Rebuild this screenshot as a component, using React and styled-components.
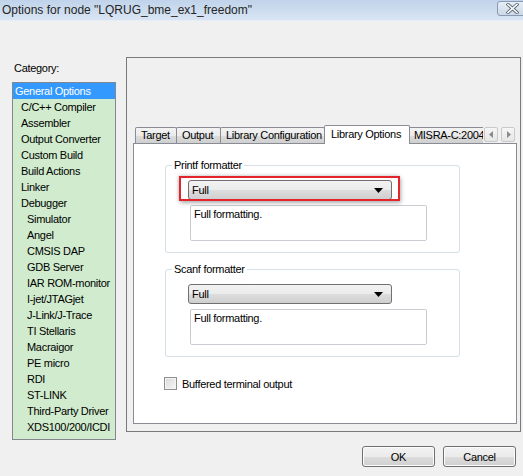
import React from "react"
import styled, { createGlobalStyle, css } from "styled-components"

const GlobalStyle = createGlobalStyle`
  html, body {
    margin: 0;
    padding: 0;
    background: #f0f0f0;
  }
  body {
    font-family: "Liberation Sans", Arial, sans-serif;
    font-size: 11px;
    letter-spacing: -0.3px;
    color: #000;
  }
`

const categories = [
  { name: "General Options", level: 0, selected: true },
  { name: "C/C++ Compiler", level: 1 },
  { name: "Assembler", level: 1 },
  { name: "Output Converter", level: 1 },
  { name: "Custom Build", level: 1 },
  { name: "Build Actions", level: 1 },
  { name: "Linker", level: 1 },
  { name: "Debugger", level: 1 },
  { name: "Simulator", level: 2 },
  { name: "Angel", level: 2 },
  { name: "CMSIS DAP", level: 2 },
  { name: "GDB Server", level: 2 },
  { name: "IAR ROM-monitor", level: 2 },
  { name: "I-jet/JTAGjet", level: 2 },
  { name: "J-Link/J-Trace", level: 2 },
  { name: "TI Stellaris", level: 2 },
  { name: "Macraigor", level: 2 },
  { name: "PE micro", level: 2 },
  { name: "RDI", level: 2 },
  { name: "ST-LINK", level: 2 },
  { name: "Third-Party Driver", level: 2 },
  { name: "XDS100/200/ICDI", level: 2 },
]

const tabs = [
  { label: "Target", width: 42 },
  { label: "Output", width: 45 },
  { label: "Library Configuration", width: 105 },
  { label: "Library Options", width: 86, active: true },
  { label: "MISRA-C:2004", width: 80 },
]

const Window = styled.div`
  width: 523px;
  height: 476px;
  overflow: hidden;
  display: flex;
  flex-direction: column;
  background: #f0f0f0;
`

const TitleBar = styled.div`
  height: 20px;
  flex: none;
  display: flex;
  align-items: center;
  justify-content: space-between;
  padding-left: 2px;
  background: linear-gradient(to bottom, #c0d3ea 0%, #cfdeef 60%, #d9e5f3 100%);
  border-bottom: 1px solid #e6edf6;
`

const Title = styled.span`
  font-size: 12px;
  letter-spacing: 0;
  color: #252525;
  white-space: nowrap;
`

const CloseButton = styled.div`
  width: 30px;
  height: 15px;
  margin-top: -3px;
  margin-right: -4px;
  border: 1px solid #8a9ab0;
  border-radius: 3px;
  background: linear-gradient(to bottom, #e6edf6, #cdd9e8);
  display: flex;
  align-items: center;
  padding-left: 8px;
  box-sizing: border-box;
`

const Body = styled.div`
  flex: 1;
  display: flex;
  flex-direction: column;
  padding: 36px 2px 0 12px;
`

const Main = styled.div`
  display: flex;
  align-items: flex-start;
  gap: 10px;
`

const CategoryColumn = styled.div`
  width: 104px;
  flex: none;
  padding-top: 4px;
`

const CategoryLabel = styled.div`
  height: 14px;
  line-height: 14px;
  padding-left: 2px;
  margin-bottom: 7px;
`

const CategoryList = styled.div`
  border: 1px solid #828790;
  background: #d0ebcd;
  height: 356px;
`

const CategoryItem = styled.div`
  height: 16px;
  line-height: 16px;
  white-space: nowrap;
  padding-left: ${p => 2 + p.$level * 6}px;
  ${p =>
    p.$selected &&
    css`
      background: #3399ff;
      color: #fff;
    `}
`

const OptionsFrame = styled.div`
  width: 395px;
  height: 375px;
  box-sizing: border-box;
  border: 1px solid #7a7a7a;
  padding: 67px 3px 7px 6px;
  display: flex;
  flex-direction: column;
`

const TabStrip = styled.div`
  height: 19px;
  flex: none;
  display: flex;
  align-items: flex-end;
  position: relative;
  z-index: 1;
  margin-bottom: -1px;
  padding-left: 2px;
`

const Tabs = styled.div`
  flex: 1;
  height: 19px;
  display: flex;
  align-items: flex-end;
  overflow: hidden;
`

const Tab = styled.div`
  flex: none;
  box-sizing: border-box;
  width: ${p => p.$width}px;
  height: 16px;
  margin-bottom: 1px;
  line-height: 15px;
  padding-left: 5px;
  white-space: nowrap;
  overflow: hidden;
  border: 1px solid #898c95;
  border-bottom: none;
  border-radius: 2px 2px 0 0;
  background: linear-gradient(to bottom, #f3f3f3 0%, #ebebeb 50%, #dddddd 51%, #cfcfcf 100%);
  & + & {
    margin-left: -1px;
  }
  ${p =>
    p.$active &&
    css`
      height: 19px;
      margin-bottom: 0;
      line-height: 17px;
      padding-left: 6px;
      background: #fff;
      margin-left: -1px;
      margin-right: -1px;
      position: relative;
      z-index: 1;
    `}
`

const ScrollArrows = styled.div`
  flex: none;
  display: flex;
  gap: 3px;
  margin: 0 2px 2px 1px;
`

const ArrowButton = styled.div`
  width: 14px;
  height: 15px;
  box-sizing: border-box;
  border: 1px solid #c9c9c9;
  border-radius: 2px;
  background: linear-gradient(to bottom, #f6f6f6, #e6e6e6);
  display: flex;
  align-items: center;
  justify-content: center;
`

const TabPage = styled.div`
  flex: 1;
  background: #fff;
  border: 1px solid #898c95;
  padding: 15px 0 0 31px;
`

const GroupBox = styled.fieldset`
  width: 295px;
  box-sizing: border-box;
  margin: 0 0 10px 0;
  border: 1px solid #d5dfe5;
  border-radius: 3px;
  padding: 8px 0 11px 22px;
  min-inline-size: 0;
`

const GroupLabel = styled.legend`
  padding: 0 2px;
  margin-left: -16px;
  line-height: 13px;
`

const ComboWrap = styled.div`
  position: relative;
  width: 204px;
  ${p =>
    p.$marked &&
    css`
      &::after {
        content: "";
        position: absolute;
        top: -4px;
        left: -9px;
        right: -8px;
        bottom: -1px;
        border: 2px solid #e3252b;
        box-shadow: 1px 2px 4px rgba(0, 0, 0, 0.3), -1px -1px 3px rgba(0, 0, 0, 0.15);
        pointer-events: none;
      }
    `}
`

const Combo = styled.div`
  height: 20px;
  box-sizing: border-box;
  border: 1px solid #707070;
  border-radius: 3px;
  background: linear-gradient(to bottom, #f2f2f2 0%, #ebebeb 50%, #dddddd 51%, #cfcfcf 100%);
  display: flex;
  align-items: center;
  justify-content: space-between;
  padding: 0 8px 0 3px;
`

const Description = styled.div`
  width: 237px;
  height: 36px;
  box-sizing: border-box;
  margin: 5px 0 0 2px;
  border: 1px solid #c9ccd2;
  border-radius: 2px;
  padding: 2px 3px;
  background: #fff;
`

const CheckRow = styled.label`
  display: flex;
  align-items: center;
  gap: 5px;
  margin: 20px 0 0 -1px;
`

const CheckBox = styled.span`
  width: 13px;
  height: 13px;
  box-sizing: border-box;
  border: 1px solid #8f8f8f;
  box-shadow: inset 0 0 0 1px #f4f4f4;
  background: linear-gradient(135deg, #d7d7d7, #f8f8f8);
`

const ButtonRow = styled.div`
  display: flex;
  justify-content: flex-end;
  gap: 8px;
  padding-right: 5px;
  margin-top: 6px;
`

const Button = styled.div`
  width: 73px;
  height: 21px;
  box-sizing: border-box;
  border: 1px solid #707070;
  border-radius: 3px;
  background: linear-gradient(to bottom, #f2f2f2 0%, #ebebeb 50%, #dddddd 51%, #cfcfcf 100%);
  box-shadow: inset 0 0 0 1px #fcfcfc;
  display: flex;
  align-items: center;
  justify-content: center;
`

const CloseGlyph = () => (
  <svg width="13" height="11" viewBox="0 0 13 11">
    <path d="M2 1.5 L11 9.5 M11 1.5 L2 9.5" stroke="#55606e" strokeWidth="3.2" strokeLinecap="square" />
    <path d="M2 1.5 L11 9.5 M11 1.5 L2 9.5" stroke="#fff" strokeWidth="1.6" strokeLinecap="square" />
  </svg>
)

const Triangle = ({ dir }) => (
  <svg width="5" height="7" viewBox="0 0 5 7">
    <path d={dir === "left" ? "M4 0 L0 3.5 L4 7 Z" : "M1 0 L5 3.5 L1 7 Z"} fill="#8a8a8a" />
  </svg>
)

const DropArrow = () => (
  <svg width="9" height="5" viewBox="0 0 9 5">
    <path d="M0 0 H9 L4.5 5 Z" fill="#000" />
  </svg>
)

const Formatter = ({ title, marked }) => (
  <GroupBox>
    <GroupLabel>{title}</GroupLabel>
    <ComboWrap $marked={marked}>
      <Combo>
        <span>Full</span>
        <DropArrow />
      </Combo>
    </ComboWrap>
    <Description>Full formatting.</Description>
  </GroupBox>
)

export default function App() {
  return (
    <Window>
      <GlobalStyle />
      <TitleBar>
        <Title>Options for node "LQRUG_bme_ex1_freedom"</Title>
        <CloseButton>
          <CloseGlyph />
        </CloseButton>
      </TitleBar>
      <Body>
        <Main>
          <CategoryColumn>
            <CategoryLabel>Category:</CategoryLabel>
            <CategoryList>
              {categories.map(c => (
                <CategoryItem key={c.name} $level={c.level} $selected={c.selected}>
                  {c.name}
                </CategoryItem>
              ))}
            </CategoryList>
          </CategoryColumn>
          <OptionsFrame>
            <TabStrip>
              <Tabs>
                {tabs.map(t => (
                  <Tab key={t.label} $width={t.width} $active={t.active}>
                    {t.label}
                  </Tab>
                ))}
              </Tabs>
              <ScrollArrows>
                <ArrowButton>
                  <Triangle dir="left" />
                </ArrowButton>
                <ArrowButton>
                  <Triangle dir="right" />
                </ArrowButton>
              </ScrollArrows>
            </TabStrip>
            <TabPage>
              <Formatter title="Printf formatter" marked />
              <Formatter title="Scanf formatter" />
              <CheckRow>
                <CheckBox />
                <span>Buffered terminal output</span>
              </CheckRow>
            </TabPage>
          </OptionsFrame>
        </Main>
        <ButtonRow>
          <Button>OK</Button>
          <Button>Cancel</Button>
        </ButtonRow>
      </Body>
    </Window>
  )
}
